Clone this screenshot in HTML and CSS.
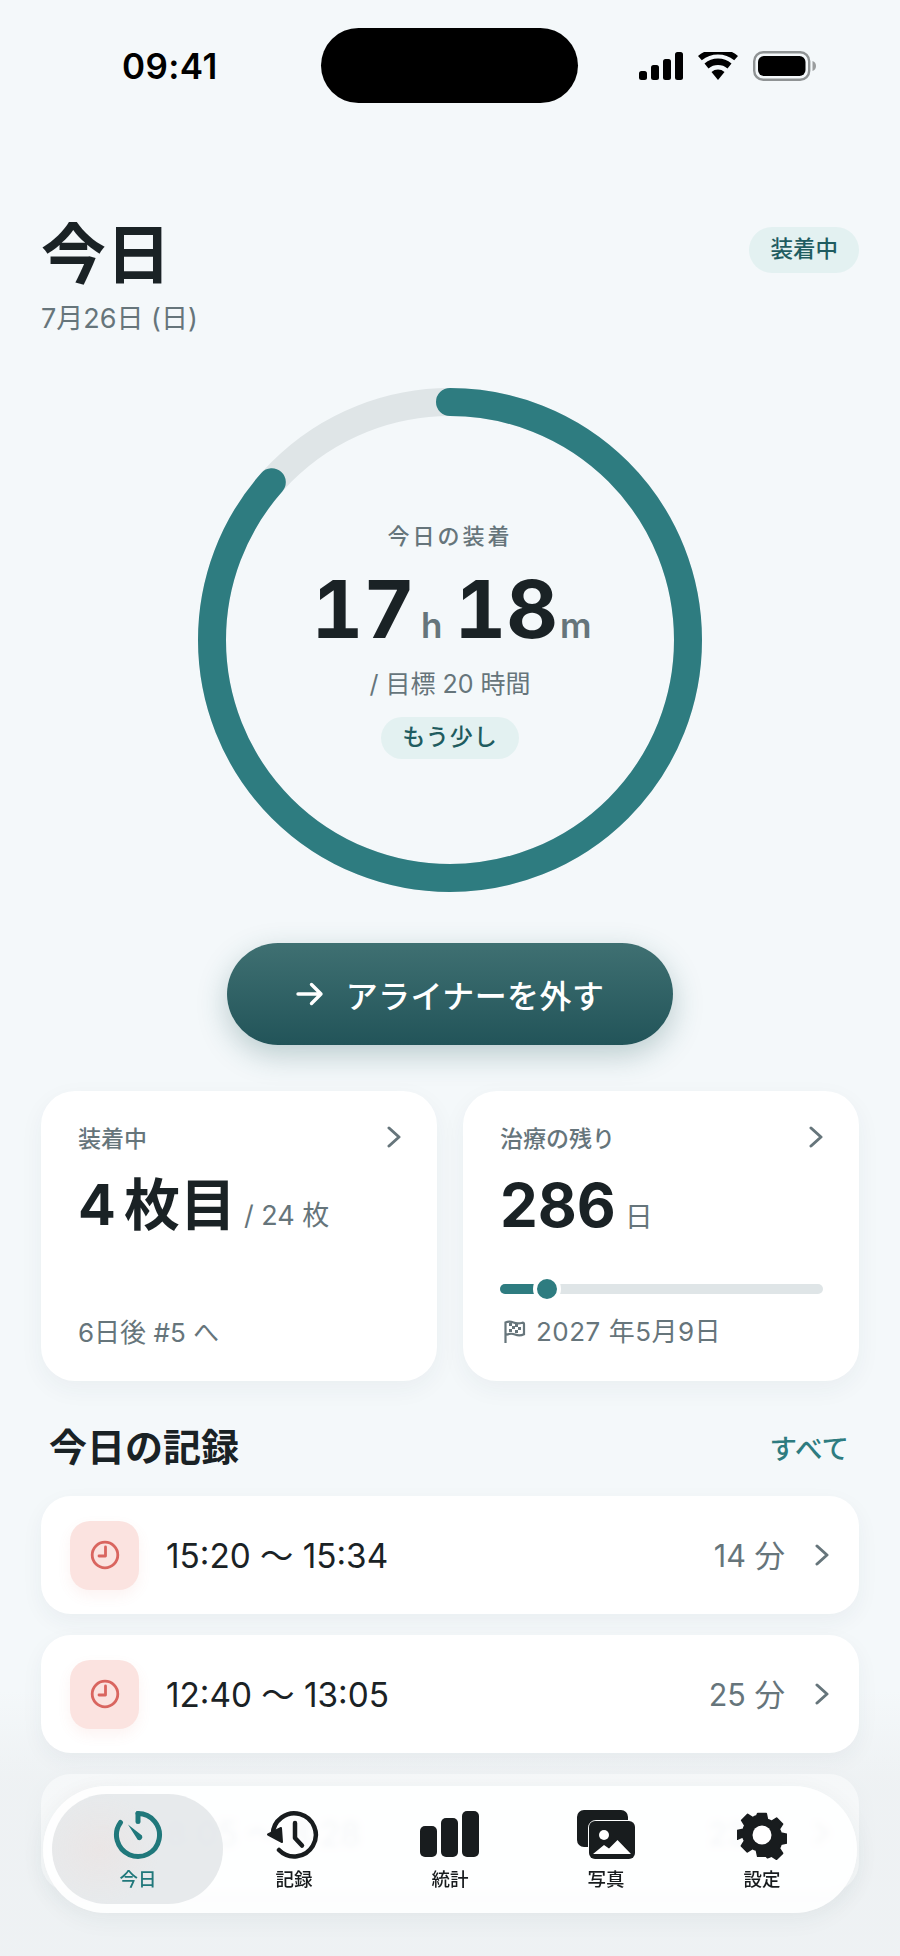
FILE: index.html
```html
<!DOCTYPE html>
<html lang="ja">
<head>
<meta charset="utf-8">
<meta name="viewport" content="width=device-width, initial-scale=1.0">
<title>今日</title>
<link rel="stylesheet" href="styles.css">
</head>
<body>
<div class="screen">

  <div class="status_bar">
    <span class="status_time">09:41</span>
    <div class="island"></div>
    <div class="status_icons">
      <svg width="44" height="28" viewBox="0 0 44 28"><rect x="0" y="19" width="8" height="9" rx="2.500"/><rect x="12" y="13" width="8" height="15" rx="2.500"/><rect x="24" y="7" width="8" height="21" rx="2.500"/><rect x="36" y="0" width="8" height="28" rx="2.500"/></svg>
      <svg width="40" height="28" viewBox="0 0 40 28"><path d="M20 28l-6.500-8a10 10 0 0 1 13 0zM10.500 16.500l-4-5a21 21 0 0 1 27 0l-4 5a15 15 0 0 0-19 0zM3.800 8.300L0 4a31 31 0 0 1 40 0l-3.800 4.300a25.500 25.500 0 0 0-32.400 0z"/></svg>
      <svg width="63" height="30" viewBox="0 0 63 30"><rect x="1.200" y="1.200" width="55" height="27.600" rx="9" fill="none" stroke="#8f9394" stroke-width="2.400"/><rect x="5" y="5" width="47.500" height="20" rx="6"/><path d="M59.500 10c2.200.6 3.500 2.600 3.500 5s-1.300 4.400-3.500 5z" fill="#9a9d9e"/></svg>
    </div>
  </div>

  <div class="head">
    <div>
      <h1 class="title">今日</h1>
      <div class="date">7月26日 (日)</div>
    </div>
    <span class="badge">装着中</span>
  </div>

  <div class="ring_wrap">
    <svg class="ring" width="504" height="504" viewBox="0 0 504 504">
      <circle class="ring_track" cx="252" cy="252" r="238"/>
      <circle class="ring_value" cx="252" cy="252" r="238" stroke-dasharray="1293.500 1495.400" transform="rotate(-90 252 252)"/>
    </svg>
    <div class="ring_text">
      <div class="ring_label">今日の装着</div>
      <div class="ring_time"><b>17</b><i class="unit_h">h</i><b>18</b><i class="unit_m">m</i></div>
      <div class="ring_goal">/ 目標 20 時間</div>
      <span class="pill">もう少し</span>
    </div>
  </div>

  <div class="action_row">
    <button class="action">
      <svg width="28" height="24" viewBox="0 0 28 24"><path d="M2 12h23M15.500 2.500L25 12l-9.500 9.500" fill="none" stroke="#fff" stroke-width="3.400" stroke-linecap="round" stroke-linejoin="round"/></svg>
      <span>アライナーを外す</span>
    </button>
  </div>

  <div class="cards">
    <div class="card">
      <div class="card_top"><span class="card_label">装着中</span><svg class="chev" width="14" height="22" viewBox="0 0 14 22"><path d="M2 2l10 9-10 9"/></svg></div>
      <div class="card_big"><b class="num_four">4</b><b>枚目</b><span class="card_sub">/ 24 枚</span></div>
      <div class="card_foot">6日後 #5 へ</div>
    </div>
    <div class="card">
      <div class="card_top"><span class="card_label">治療の残り</span><svg class="chev" width="14" height="22" viewBox="0 0 14 22"><path d="M2 2l10 9-10 9"/></svg></div>
      <div class="card_big"><b class="num_days">286</b><span class="card_sub days">日</span></div>
      <div class="slider"><div class="slider_fill" style="width:15%"></div><div class="slider_thumb"></div></div>
      <div class="card_foot flag_foot">
        <svg width="24" height="24" viewBox="0 0 24 24"><path d="M2.500 23V2.500c3-1.500 5.500-1 8 0s5 1.200 9 .2c1.500 0 1.500 1 1.500 1.500v10c-3 1.500-6.500 1.300-9 .3s-5.500-1.200-9.500.5" fill="none" stroke="#66757b" stroke-width="2.200"/><path d="M6 3h3v3H6zM12 4h3v3h-3zM9 6h3v3H9zM15 7h3v3h-3zM6 9h3v3H6zM12 10h3v3h-3z" fill="#66757b"/></svg>
        <span>2027 年5月9日</span>
      </div>
    </div>
  </div>

  <div class="section_head">
    <h2 class="section_title">今日の記録</h2>
    <span class="section_link">すべて</span>
  </div>

  <div class="rows">
    <div class="row">
      <div class="row_icon"><svg width="30" height="30" viewBox="0 0 30 30"><circle cx="15" cy="15" r="12.800"/><path d="M15.500 7v9H9"/></svg></div>
      <span class="row_time">15:20 〜 15:34</span>
      <span class="row_len">14 分</span>
      <svg class="chev row_chev" width="14" height="22" viewBox="0 0 14 22"><path d="M2 2l10 9-10 9"/></svg>
    </div>
    <div class="row">
      <div class="row_icon"><svg width="30" height="30" viewBox="0 0 30 30"><circle cx="15" cy="15" r="12.800"/><path d="M15.500 7v9H9"/></svg></div>
      <span class="row_time">12:40 〜 13:05</span>
      <span class="row_len">25 分</span>
      <svg class="chev row_chev" width="14" height="22" viewBox="0 0 14 22"><path d="M2 2l10 9-10 9"/></svg>
    </div>
    <div class="row row_under">
      <div class="row_icon"><svg width="30" height="30" viewBox="0 0 30 30"><circle cx="15" cy="15" r="12.800"/><path d="M15.500 7v9H9"/></svg></div>
      <span class="row_time">8:05 〜 8:28</span>
      <span class="row_len">23 分</span>
      <svg class="chev row_chev" width="14" height="22" viewBox="0 0 14 22"><path d="M2 2l10 9-10 9"/></svg>
    </div>
  </div>

  <div class="fade"></div>

  <div class="nav">
    <div class="nav_active"></div>
    <div class="nav_item on">
      <svg width="50" height="50" viewBox="0 0 50 50"><path d="M25 3.500a21.500 21.500 0 1 1-17.500 9" fill="none" stroke="#20787b" stroke-width="5" stroke-linecap="round"/><path d="M25 3.500v8" fill="none" stroke="#20787b" stroke-width="5" stroke-linecap="round"/><path d="M15 14.500l14 11a3.200 3.200 0 0 1-4.300 4.300z" fill="#20787b"/></svg>
      <span>今日</span>
    </div>
    <div class="nav_item">
      <svg width="54" height="50" viewBox="0 0 54 50"><path d="M5.800 24.500A21.500 21.500 0 1 1 12 40" fill="none" stroke="#181c1e" stroke-width="4.500" stroke-linecap="round"/><path d="M1 24.500L14 18l1 14z" fill="#181c1e" stroke="#181c1e" stroke-width="2" stroke-linejoin="round"/><path d="M28 13v15l7 7.500" fill="none" stroke="#181c1e" stroke-width="4.500" stroke-linecap="round" stroke-linejoin="round"/></svg>
      <span>記録</span>
    </div>
    <div class="nav_item">
      <svg width="60" height="50" viewBox="0 0 60 50"><rect x="0" y="16" width="17" height="31" rx="5"/><rect x="21" y="8" width="17" height="39" rx="5"/><rect x="42" y="1" width="17" height="46" rx="5"/></svg>
      <span>統計</span>
    </div>
    <div class="nav_item">
      <svg width="60" height="50" viewBox="0 0 60 50"><path d="M8 0h37a7 7 0 0 1 7 7v3H20a8 8 0 0 0-8 8v19H8a7 7 0 0 1-7-7V7a7 7 0 0 1 7-7z"/><rect x="13" y="11" width="46" height="38" rx="6"/><circle cx="28" cy="25" r="5" fill="#fff"/><path d="M17 44l11-9 5 3.500 8.500-8.500L55 44z" fill="#fff"/></svg>
      <span>写真</span>
    </div>
    <div class="nav_item">
      <svg width="50" height="50" viewBox="0 0 50 50"><path d="M20 0h10l1.500 7a19 19 0 0 1 4.700 2l6-3.800 7 7-3.800 6a19 19 0 0 1 2 4.700l7 1.500v10l-7 1.500a19 19 0 0 1-2 4.700l3.800 6-7 7-6-3.800a19 19 0 0 1-4.700 2L30 50H20l-1.500-7a19 19 0 0 1-4.700-2l-6 3.800-7-7 3.800-6a19 19 0 0 1-2-4.700L-4 30V20l7-1.500a19 19 0 0 1 2-4.700l-3.800-6 7-7 6 3.800a19 19 0 0 1 4.700-2z" transform="translate(3.700 3.700) scale(.85)" stroke="#181c1e" stroke-width="2" stroke-linejoin="round"/><circle cx="25" cy="25" r="9.500" fill="#fff"/></svg>
      <span>設定</span>
    </div>
  </div>

</div>
</body>
</html>
```

FILE: styles.css
```css
* { box-sizing: border-box; }

html, body { margin: 0; padding: 0; }

body {
  color: #1a2225;
  font-family: "Inter", "Noto Sans CJK JP", sans-serif;
}

.screen {
  position: relative;
  width: 900px;
  height: 1956px;
  overflow: hidden;
  padding: 28px 41px 0 41px;
  background: linear-gradient(180deg, #f4f8fa 1690px, #eef1f3 1790px);
}

/* status bar */
.status_bar {
  display: flex;
  align-items: center;
  height: 75px;
  margin-left: 81px;
  margin-right: 43px;
}
.status_time {
  width: 199px;
  font-size: 35px;
  font-weight: 600;
  color: #000;
  letter-spacing: 0.4px;
}
.island {
  width: 257px;
  height: 75px;
  border-radius: 38px;
  background: #000;
}
.status_icons {
  display: flex;
  align-items: center;
  gap: 15px;
  margin-left: auto;
}
.status_icons svg { display: block; }

/* header */
.head {
  display: flex;
  justify-content: space-between;
  align-items: flex-start;
  margin-top: 114px;
}
.title {
  margin: 0;
  font-size: 65px;
  font-weight: 700;
  line-height: 76px;
}
.date {
  margin-top: 8px;
  font-size: 27px;
  line-height: 36px;
  color: #66757b;
}
.badge {
  margin-top: 10px;
  padding: 0 21px;
  height: 46px;
  line-height: 44px;
  border-radius: 23px;
  background: #e3f1f1;
  color: #1f5c60;
  font-size: 22.500px;
  font-weight: 500;
}

/* ring */
.ring_wrap {
  display: grid;
  justify-content: center;
  margin-top: 51px;
}
.ring, .ring_text { grid-area: 1 / 1; }
.ring { display: block; }
.ring_track { fill: none; stroke: #dfe5e7; stroke-width: 28; }
.ring_value { fill: none; stroke: #2e7c80; stroke-width: 28; stroke-linecap: round; }
.ring_text {
  display: flex;
  flex-direction: column;
  align-items: center;
  padding-top: 132px;
}
.ring_label {
  font-size: 22px;
  font-weight: 500;
  line-height: 32px;
  letter-spacing: 3px;
  color: #66757b;
}
.ring_time {
  display: flex;
  align-items: baseline;
  height: 96px;
  line-height: 96px;
  margin-top: 9px;
  padding-left: 3px;
}
.ring_time b {
  font-size: 80px;
  font-weight: 700;
  font-variant-numeric: tabular-nums;
}
.ring_time i { font-style: normal; font-size: 35px; font-weight: 600; color: #66757b; }
.unit_h { margin: 0 12px 0 6px; }
.unit_m { margin-left: 2px; }
.ring_goal {
  margin-top: 10px;
  font-size: 25px;
  line-height: 34px;
  color: #66757b;
}
.pill {
  margin-top: 16px;
  padding: 0 21px;
  height: 42px;
  line-height: 40px;
  border-radius: 21px;
  background: #e3f1f1;
  color: #1f5c60;
  font-size: 23px;
  font-weight: 500;
  letter-spacing: 1px;
}

/* main button */
.action_row {
  display: flex;
  justify-content: center;
  margin-top: 51px;
}
.action {
  display: flex;
  align-items: center;
  justify-content: center;
  gap: 22px;
  width: 446px;
  height: 102px;
  border: none;
  border-radius: 51px;
  background: linear-gradient(180deg, #3f7072, #225459);
  box-shadow: 0 10px 30px rgba(37, 90, 95, 0.28);
  color: #fff;
  font-family: inherit;
  font-size: 32px;
  font-weight: 500;
  letter-spacing: 0.4px;
}

/* cards */
.cards {
  display: grid;
  grid-template-columns: 396px 396px;
  gap: 26px;
  margin-top: 46px;
}
.card {
  height: 290px;
  padding: 32px 36px 0 37px;
  border-radius: 34px;
  background: #fff;
  box-shadow: 0 8px 24px rgba(40, 60, 70, 0.05);
}
.card_top {
  display: flex;
  justify-content: space-between;
  align-items: center;
  height: 28px;
}
.card_label {
  font-size: 23px;
  font-weight: 500;
  color: #66757b;
}
.chev { fill: none; stroke: #66757b; stroke-width: 3; stroke-linecap: round; stroke-linejoin: round; }
.card_big {
  display: flex;
  align-items: baseline;
  height: 76px;
  margin-top: 16px;
  line-height: 76px;
}
.card_big b { font-size: 56px; font-weight: 700; }
.card_big .num_four { margin-right: 8px; }
.card_big .num_days { font-size: 60px; }
.card_sub {
  margin-left: 8px;
  font-size: 27px;
  color: #66757b;
}
.card_sub.days { margin-left: 9px; font-size: 28px; }
.card_foot {
  margin-top: 72px;
  font-size: 26px;
  line-height: 36px;
  color: #66757b;
}
.slider {
  position: relative;
  height: 10px;
  margin-top: 41px;
  border-radius: 5px;
  background: #dfe5e7;
}
.slider_fill {
  height: 10px;
  border-radius: 5px;
  background: #2e7c80;
}
.slider_thumb {
  position: absolute;
  top: -9px;
  left: 33px;
  width: 28px;
  height: 28px;
  border: 4px solid #fff;
  border-radius: 50%;
  background: #2e7c80;
}
.flag_foot {
  display: flex;
  align-items: center;
  gap: 9px;
  margin-top: 20px;
  padding-left: 3px;
  letter-spacing: 0.5px;
}
.flag_foot svg { display: block; }

/* list */
.section_head {
  display: flex;
  justify-content: space-between;
  align-items: center;
  margin-top: 41px;
  padding: 0 10px 0 8px;
}
.section_title {
  margin: 0;
  font-size: 38px;
  font-weight: 700;
  line-height: 50px;
}
.section_link {
  font-size: 27.500px;
  font-weight: 500;
  color: #2e7c80;
}
.rows {
  display: flex;
  flex-direction: column;
  gap: 21px;
  margin-top: 24px;
}
.row {
  display: flex;
  align-items: center;
  height: 118px;
  padding: 0 30px 0 29px;
  border-radius: 30px;
  background: #fff;
  box-shadow: 0 8px 22px rgba(40, 60, 70, 0.05);
}
.row_icon {
  display: flex;
  align-items: center;
  justify-content: center;
  width: 69px;
  height: 69px;
  border-radius: 20px;
  background: #fbe3e0;
  box-shadow: 0 6px 14px rgba(217, 101, 95, 0.08);
}
.row_icon svg { fill: none; stroke: #d9655f; stroke-width: 2.800; stroke-linecap: round; stroke-linejoin: round; }
.row_time {
  margin: 0 0 3px 27px;
  font-size: 33.300px;
  color: #1a2225;
}
.row_len {
  margin: 0 0 3px auto;
  font-size: 30.500px;
  color: #66757b;
}
.row_chev { margin-left: 30px; }
.row_under .row_icon { filter: blur(10px); }
.row_under .row_time, .row_under .row_len { color: #4f7390; }

/* bottom nav, over the list */
.fade {
  position: absolute;
  left: 0;
  right: 0;
  top: 1756px;
  bottom: 0;
  background: linear-gradient(180deg, rgba(238, 242, 244, 0) 0, rgba(238, 242, 244, 0.55) 18px);
}
.nav {
  position: absolute;
  left: 43px;
  top: 1786px;
  width: 814px;
  height: 127px;
  display: grid;
  grid-template-columns: repeat(5, 156px);
  padding-left: 17px;
  overflow: hidden;
  border-radius: 64px;
  background: rgba(255, 255, 255, 0.88);
  backdrop-filter: blur(3px);
  box-shadow: 0 6px 24px rgba(40, 60, 70, 0.06);
}
.nav_active {
  position: absolute;
  left: 9px;
  top: 8px;
  width: 171px;
  height: 110px;
  border-radius: 55px;
  background: radial-gradient(60px 55px at 28% 50%, rgba(240, 222, 218, 0.35), transparent), rgba(222, 226, 228, 0.72);
}
.nav_item {
  position: relative;
  display: flex;
  flex-direction: column;
  align-items: center;
  padding-top: 24px;
  font-size: 18.500px;
  font-weight: 500;
  color: #181c1e;
}
.nav_item svg { display: block; fill: #181c1e; height: 50px; }
.nav_item span { margin-top: 6px; line-height: 26px; }
.nav_item.on { color: #20787b; }
```
